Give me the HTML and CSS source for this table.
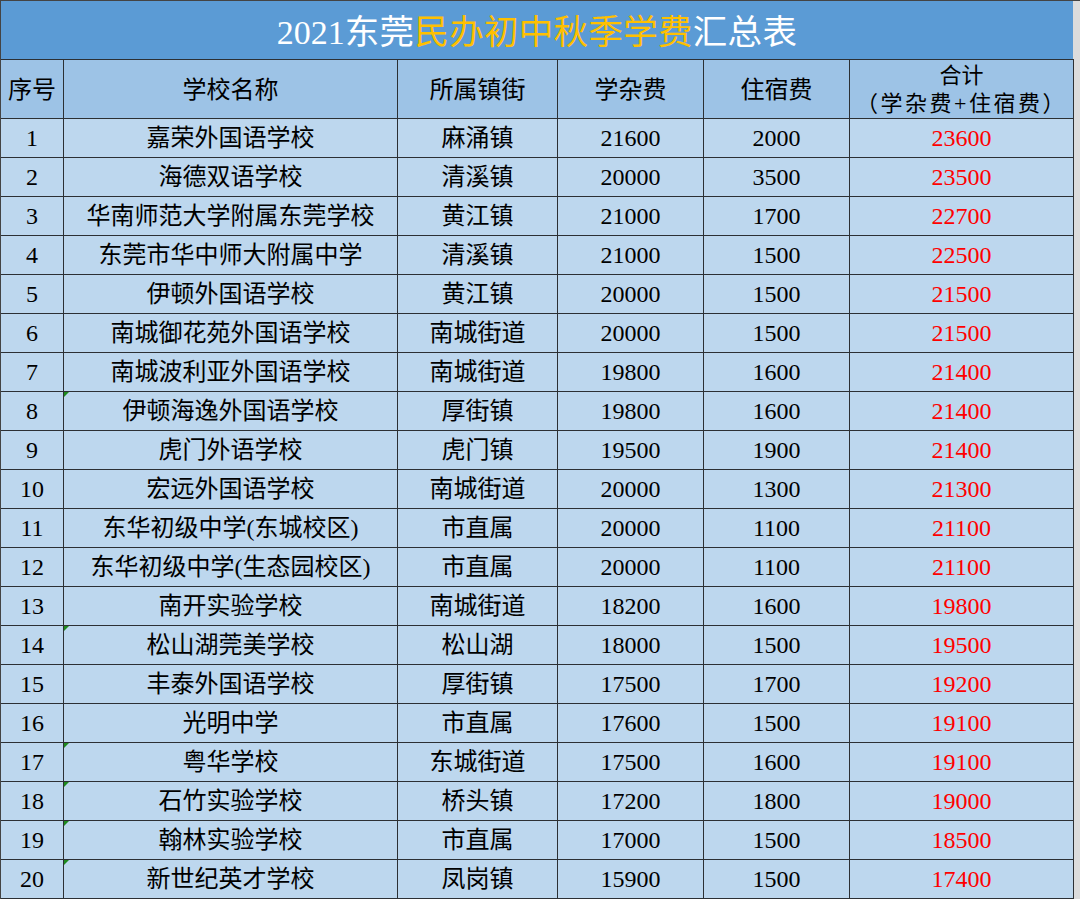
FILE: index.html
```html
<!DOCTYPE html>
<html lang="zh-CN">
<head>
<meta charset="utf-8">
<title>2021东莞民办初中秋季学费汇总表</title>
<link rel="stylesheet" href="styles.css">
</head>
<body>
<div class="frame">
  <div class="title"><span class="yr">2021</span>东莞<span class="hl">民办初中秋季学费</span>汇总表</div>
  <table class="fees">
    <colgroup>
      <col class="c-no"><col class="c-name"><col class="c-town"><col class="c-fee"><col class="c-board"><col class="c-total">
    </colgroup>
    <thead>
      <tr><th>序号</th><th>学校名称</th><th>所属镇街</th><th>学杂费</th><th>住宿费</th><th class="two">合计<br><span class="sub">（学杂费+住宿费）</span></th></tr>
    </thead>
    <tbody>
      <tr><td>1</td><td>嘉荣外国语学校</td><td>麻涌镇</td><td>21600</td><td>2000</td><td class="red">23600</td></tr>
      <tr><td>2</td><td>海德双语学校</td><td>清溪镇</td><td>20000</td><td>3500</td><td class="red">23500</td></tr>
      <tr><td>3</td><td>华南师范大学附属东莞学校</td><td>黄江镇</td><td>21000</td><td>1700</td><td class="red">22700</td></tr>
      <tr><td>4</td><td>东莞市华中师大附属中学</td><td>清溪镇</td><td>21000</td><td>1500</td><td class="red">22500</td></tr>
      <tr><td>5</td><td>伊顿外国语学校</td><td>黄江镇</td><td>20000</td><td>1500</td><td class="red">21500</td></tr>
      <tr><td>6</td><td>南城御花苑外国语学校</td><td>南城街道</td><td>20000</td><td>1500</td><td class="red">21500</td></tr>
      <tr><td>7</td><td>南城波利亚外国语学校</td><td>南城街道</td><td>19800</td><td>1600</td><td class="red">21400</td></tr>
      <tr><td>8</td><td class="flag">伊顿海逸外国语学校</td><td>厚街镇</td><td>19800</td><td>1600</td><td class="red">21400</td></tr>
      <tr><td>9</td><td>虎门外语学校</td><td>虎门镇</td><td>19500</td><td>1900</td><td class="red">21400</td></tr>
      <tr><td>10</td><td>宏远外国语学校</td><td>南城街道</td><td>20000</td><td>1300</td><td class="red">21300</td></tr>
      <tr><td>11</td><td>东华初级中学(东城校区)</td><td>市直属</td><td>20000</td><td>1100</td><td class="red">21100</td></tr>
      <tr><td>12</td><td>东华初级中学(生态园校区)</td><td>市直属</td><td>20000</td><td>1100</td><td class="red">21100</td></tr>
      <tr><td>13</td><td>南开实验学校</td><td>南城街道</td><td>18200</td><td>1600</td><td class="red">19800</td></tr>
      <tr><td>14</td><td class="flag">松山湖莞美学校</td><td>松山湖</td><td>18000</td><td>1500</td><td class="red">19500</td></tr>
      <tr><td>15</td><td>丰泰外国语学校</td><td>厚街镇</td><td>17500</td><td>1700</td><td class="red">19200</td></tr>
      <tr><td>16</td><td>光明中学</td><td>市直属</td><td>17600</td><td>1500</td><td class="red">19100</td></tr>
      <tr><td>17</td><td class="flag">粤华学校</td><td>东城街道</td><td>17500</td><td>1600</td><td class="red">19100</td></tr>
      <tr><td>18</td><td class="flag">石竹实验学校</td><td>桥头镇</td><td>17200</td><td>1800</td><td class="red">19000</td></tr>
      <tr><td>19</td><td class="flag">翰林实验学校</td><td>市直属</td><td>17000</td><td>1500</td><td class="red">18500</td></tr>
      <tr><td>20</td><td class="flag">新世纪英才学校</td><td>凤岗镇</td><td>15900</td><td>1500</td><td class="red">17400</td></tr>
    </tbody>
  </table>
</div>
</body>
</html>
```

FILE: styles.css
```css
html, body {
  margin: 0;
  padding: 0;
  background: #ffffff;
}
body {
  font-family: "Liberation Serif", "Noto Sans CJK SC", serif;
  color: #000;
}
.frame {
  width: 1076px;
  height: 898px;
  border-top: 1px solid #444;
  border-left: 1px solid #444;
  border-right: 1px solid #444;
  background: #dcdcdc;
  padding-right: 3px;
  overflow: hidden;
  box-sizing: content-box;
}
.title {
  width: 1072px;
  height: 58px;
  background: #5b9bd5;
  color: #ffffff;
  font-size: 34.5px;
  letter-spacing: 0.3px;
  line-height: 62px;
  text-align: center;
  white-space: nowrap;
}
.title .yr {
  font-size: 34px;
  letter-spacing: 0;
}
.title .hl {
  color: #ffc000;
}
.fees {
  width: 1073px;
  border-collapse: collapse;
  table-layout: fixed;
  margin-left: -1px;
}
.c-no { width: 63px; }
.c-name { width: 334px; }
.c-town { width: 160px; }
.c-fee { width: 146px; }
.c-board { width: 146px; }
.c-total { width: 224px; }
.fees th, .fees td {
  border: 1px solid #2c3034;
  padding: 0;
  text-align: center;
  font-weight: normal;
  font-size: 24px;
  white-space: nowrap;
  overflow: hidden;
}
.fees th {
  background: #9dc3e6;
  height: 55px;
  line-height: 30px;
  padding-top: 2px;
}
.fees th.two {
  font-size: 22px;
  line-height: 28px;
}
.fees th.two .sub {
  letter-spacing: 2.5px;
}
.fees td {
  background: #bdd7ee;
  height: 38px;
  line-height: 38px;
}
.fees td.red {
  color: #ff0000;
}
.fees td.flag {
  position: relative;
}
.fees td.flag::before {
  content: "";
  position: absolute;
  left: 0;
  top: 0;
  width: 0;
  height: 0;
  border-top: 5px solid #1e8a1e;
  border-right: 5px solid transparent;
}
```
